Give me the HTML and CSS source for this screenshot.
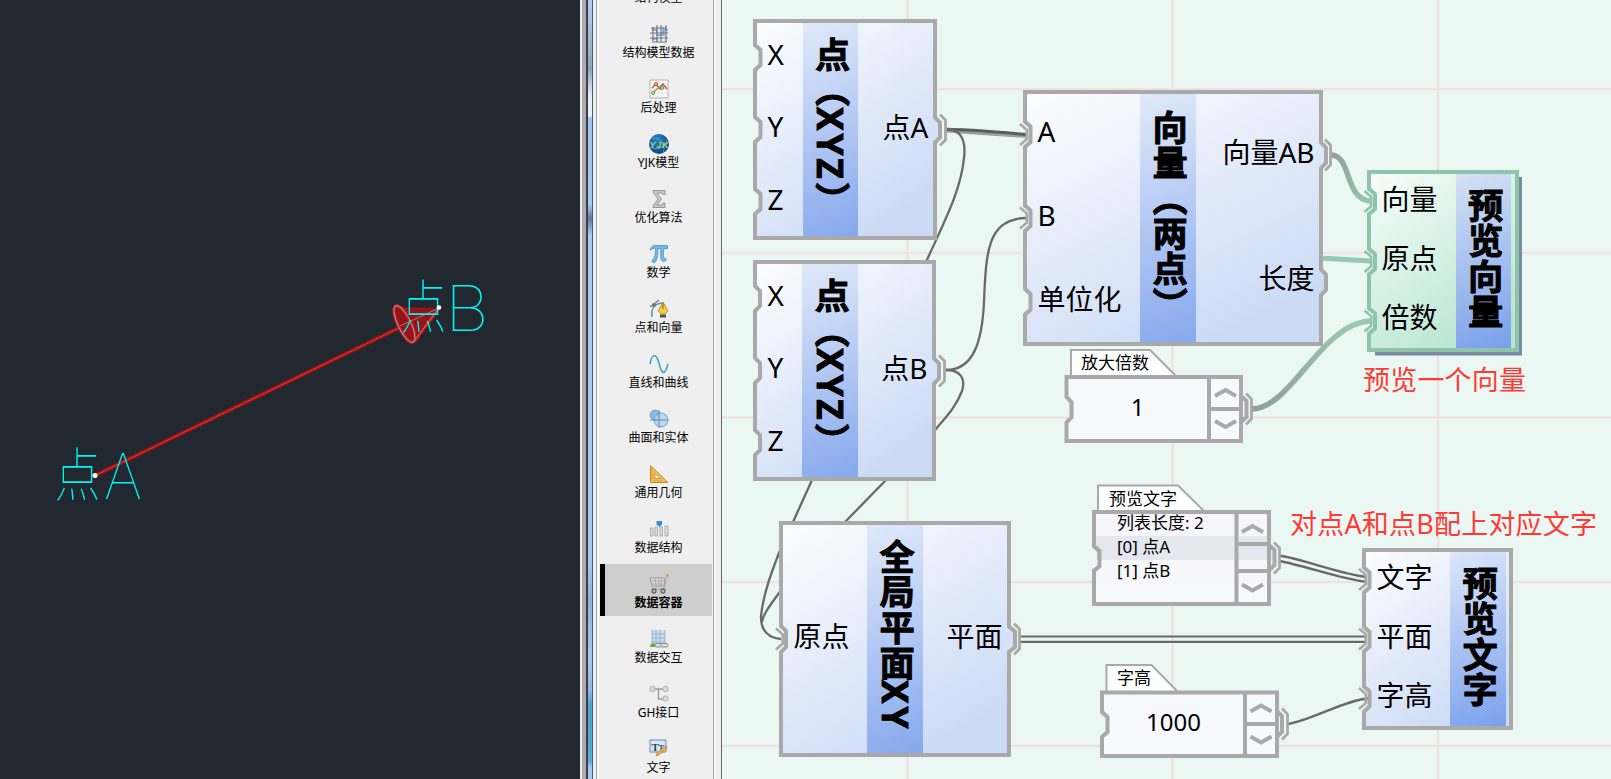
FILE: index.html
```html
<!DOCTYPE html>
<html lang="zh-CN">
<head>
<meta charset="utf-8">
<title>预览向量</title>
<link rel="stylesheet" href="styles.css">
</head>
<body>
<main class="app">
  <section class="cad">
    <svg class="cad-view" viewBox="0 0 580 779">
      <path d="M95 475.500L405 325" stroke="#a80d10" stroke-width="4"/>
      <path d="M95 475.500L405 325" stroke="#bd4a4a" stroke-width="1"/>
      <path d="M396 307L439 308L415 341C404 342 391 322 396 307Z" fill="#961318"/>
      <path d="M439 308L415 341" stroke="#d3151a" stroke-width="3"/>
      <ellipse cx="404.500" cy="324" rx="6.500" ry="20" transform="rotate(-26 404.500 324)" fill="none" stroke="#c81519" stroke-width="3.500"/>
      <ellipse cx="404.500" cy="324" rx="6.500" ry="20" transform="rotate(-26 404.500 324)" fill="none" stroke="#79b5b5" stroke-width="1"/>
      <path d="M439 308L415 340M439 308L400 326" stroke="#a77777" stroke-width="1"/>
      <g class="cad-text">
        <text class="cad-han" x="54.500" y="496" font-size="58" textLength="46" lengthAdjust="spacingAndGlyphs">点</text>
        <text class="cad-latin" x="104" y="499" font-size="63" textLength="38" lengthAdjust="spacingAndGlyphs">A</text>
        <text class="cad-han" x="400.500" y="328" font-size="58" textLength="46" lengthAdjust="spacingAndGlyphs">点</text>
        <text class="cad-latin" x="445" y="331" font-size="63" textLength="44" lengthAdjust="spacingAndGlyphs">B</text>
      </g>
      <circle cx="95" cy="475.500" r="2.500" fill="#fff"/>
      <circle cx="439" cy="307.500" r="2.300" fill="#fff"/>
    </svg>
  </section>
  <div class="splitter"><i class="s1"></i><i class="s2"></i><i class="s3"></i><i class="s4"></i><i class="s5"></i><i class="s6"></i><i class="s7"></i><i class="s8"></i></div>
  <nav class="sidebar">
    <ul class="menu">
      <li class="item"><svg class="icon" viewBox="0 0 20 20"></svg><span>结构模型</span></li>
      <li class="item"><svg class="icon" viewBox="0 0 20 20"><path d="M3 6h5v5h7V6h4M3 15h5v3M14 3v8" stroke="#6aa5d8" stroke-width="1.300" fill="none"/><path d="M2 4h16M1 9h18M1 14h18M3 18h15" stroke="#73777c" stroke-width="1.100"/><path d="M4 3v14M8 1v17M12 1v17M17 1v17" stroke="#6c7178" stroke-width="1.100"/></svg><span>结构模型数据</span></li>
      <li class="item"><svg class="icon" viewBox="0 0 20 20"><path d="M1 1h18v18H1z" fill="#f8f8f6" stroke="#b2b2b2"/><path d="M5 1v18M9 1v18M13 1v18M1 6h18M1 10h18M1 14h18" stroke="#dedede" stroke-width=".7"/><path d="M3 9l4-4 4 5 3-5 4 5" fill="none" stroke="#cf4c42" stroke-width="1.300"/><path d="M4 14l5-5 4-3 2 4" fill="none" stroke="#77a54b" stroke-width="1.300"/><circle cx="7" cy="5" r="1.400" fill="#fff" stroke="#d23"/><circle cx="4" cy="14" r="1.400" fill="#fff" stroke="#583"/><circle cx="13" cy="9" r="1.400" fill="#fff" stroke="#583"/></svg><span>后处理</span></li>
      <li class="item"><svg class="icon" viewBox="0 0 20 20"><circle cx="10" cy="10" r="10" fill="url(#globe)"/><path d="M3 5C9 1 18 10 14 19M1 13C8 17 18 13 18 5" stroke="#7fb8dd" stroke-width=".7" fill="none"/><text x="0.500" y="13.500" class="logo" textLength="19">YJK</text></svg><span>YJK模型</span></li>
      <li class="item"><svg class="icon" viewBox="0 0 20 20"><path d="M4 1.500h12v4h-2l-1-1.500H8l4.500 6L8 16h5l1-2h2v4.500H4V17l5-7-5-7z" fill="#c9c9c9" stroke="#8f8f8f" stroke-width=".9"/></svg><span>优化算法</span></li>
      <li class="item"><svg class="icon" viewBox="0 0 20 20"><path d="M1 6C2.500 2 4 1.500 7 1.500h11.500v3H15c-1 7-1 11 2 10v2c-5 3-6-2-5-12H9C9 11 8 18 5 18.500c-3 0-2-3 0-4 1-2 1.500-5 1.500-10C4 4 3 5 2 6z" fill="#75b9e8" stroke="#4c8fc2" stroke-width=".8"/></svg><span>数学</span></li>
      <li class="item"><svg class="icon" viewBox="0 0 20 20"><path d="M3 18C2 9 5 5 13 4" stroke="#4f9ac4" stroke-width="1.600" fill="none"/><path d="M1 8L10 1" stroke="#777" stroke-width="1.300"/><circle cx="5" cy="6" r="2" fill="#777"/><path d="M14 3l5 9-3 3h-4l-3-3z" fill="#f8cf42" stroke="#a87d24" stroke-width=".8"/><path d="M14 4v6" stroke="#8b641a"/><path d="M11 15.500h6v3h-6z" fill="#515151"/></svg><span>点和向量</span></li>
      <li class="item"><svg class="icon" viewBox="0 0 20 20"><path d="M1 10C3 -1 7-1 10 9C13 22 16 21 19 10" fill="none" stroke="#4296c7" stroke-width="1.500"/></svg><span>直线和曲线</span></li>
      <li class="item"><svg class="icon" viewBox="0 0 20 20"><circle cx="6" cy="6" r="5" fill="#8bbde3" stroke="#6397c0" stroke-width=".8"/><circle cx="12" cy="11" r="7" fill="#b1d1ee" fill-opacity=".8" stroke="#6b9fce"/><path d="M10 1v18M1 11h18" stroke="#63829e" stroke-width=".9"/></svg><span>曲面和实体</span></li>
      <li class="item"><svg class="icon" viewBox="0 0 20 20"><path d="M1.500 1.500L19 18.500H1.500z" fill="#f0bd55" stroke="#c58b31"/><path d="M6 9l5.500 5.500H6z" fill="#f7f3e8" stroke="#c58b31" stroke-width=".8"/><path d="M2 5h2M2 8h2M2 11h2M2 14h2M6 18v-2M9 18v-2M12 18v-2" stroke="#bd8128" stroke-width=".7"/></svg><span>通用几何</span></li>
      <li class="item"><svg class="icon" viewBox="0 0 20 20"><path d="M1.500 9h2.500v8H1.500zM6 8h2.500v9H6zM11 8h2.500v9H11zM16 7h3v10h-3z" fill="#dedede" stroke="#aaa" stroke-width=".9"/><path d="M7.500 2h5.500v3.500L10.500 8L7.500 5.500z" fill="#3b8dc9"/></svg><span>数据结构</span></li>
      <li class="item active"><svg class="icon" viewBox="0 0 20 20"><path d="M1 4h15l-1 8H3z" fill="#ddd" stroke="#999"/><path d="M18 2l-3 13H3M3 7h12M3 10h11M6 4l1 8M10 4v8M13 4l-1 8" fill="none" stroke="#a2a2a2" stroke-width=".8"/><circle cx="18.500" cy="1.500" r="1.400" fill="#f0932c"/><circle cx="5" cy="17" r="2" fill="#bbb" stroke="#666" stroke-width="1.300"/><circle cx="14" cy="17" r="2" fill="#bbb" stroke="#666" stroke-width="1.300"/></svg><span>数据容器</span></li>
      <li class="item"><svg class="icon" viewBox="0 0 20 20"><path d="M3 1h13v15H3z" fill="#c9dcf0"/><path d="M3 5h13M3 9h13M3 13h13M7 1v15M11 1v15M3 1v15M16 1v15" stroke="#91a9c4" stroke-width=".8"/><path d="M1 18c0-5 6-5 6 0z" fill="#7aa737"/><rect x="6" y="14.500" width="7" height="3.500" rx="1.700" fill="#ddd" stroke="#888"/><rect x="12" y="14.500" width="7" height="3.500" rx="1.700" fill="#ddd" stroke="#888"/></svg><span>数据交互</span></li>
      <li class="item"><svg class="icon" viewBox="0 0 20 20"><path d="M5 5h11M9.500 5v10h7" fill="none" stroke="#999" stroke-width="1.300"/><g fill="#ddd" stroke="#a8a8a8" stroke-width=".9"><circle cx="3.500" cy="5" r="2.700"/><circle cx="16.500" cy="5" r="2.700"/><circle cx="16.500" cy="14.500" r="2.700"/></g></svg><span>GH接口</span></li>
      <li class="item"><svg class="icon" viewBox="0 0 20 20"><path d="M1 1h16v12H1z" fill="#d8e8f6" stroke="#668db0"/><text x="2.500" y="11.500" class="tt">T</text><text x="9.500" y="11.500" class="tt small">T</text><path d="M7 17l1-3 8-7 2 2-8 7z" fill="#f2ad42" stroke="#af6d21" stroke-width=".6"/><path d="M16 7l1-1 2 2-1 1z" fill="#c79ac9"/></svg><span>文字</span></li>
    </ul>
  </nav>
  <div class="gutter"><i class="g1"></i><i class="g2"></i><i class="g3"></i></div>
  <section class="canvas">
    <svg class="wires" viewBox="722 0 889 779">
      <defs>
        <radialGradient id="globe" cx=".4" cy=".3" r=".8"><stop offset="0" stop-color="#2586bd"/><stop offset="1" stop-color="#083a85"/></radialGradient>
        <linearGradient id="body" x1="0" y1="0" x2=".6" y2="1"><stop offset="0" stop-color="#fdfdff"/><stop offset="1" stop-color="#ccdbf5"/></linearGradient>
        <linearGradient id="mint" x1="0" y1="0" x2=".6" y2="1"><stop offset="0" stop-color="#f8fdfb"/><stop offset="1" stop-color="#b9e6d1"/></linearGradient>
        <linearGradient id="w1" gradientUnits="userSpaceOnUse" x1="1332" y1="0" x2="1365" y2="0"><stop offset="0" stop-color="#939d99"/><stop offset="1" stop-color="#93c5af"/></linearGradient>
        <linearGradient id="w2" gradientUnits="userSpaceOnUse" x1="1252" y1="0" x2="1350" y2="0"><stop offset="0" stop-color="#919b97"/><stop offset="1" stop-color="#99c8b4"/></linearGradient>
        <path id="plug-out" d="M0 -15.500l5.500 5.500V10l-5.500 5.500" fill="none" stroke-width="2.800"/>
        <path id="plug-in" d="M-5 -10.500L1.700 -4.700V4.700L-5 10.500" fill="none" stroke-width="2.600"/>
        <path id="up" d="M-10.500 4L0 -2L10.500 4" fill="none" stroke="#a9a9a9" stroke-width="4"/>
        <path id="down" d="M-10.500 -4L0 2L10.500 -4" fill="none" stroke="#a9a9a9" stroke-width="4"/>
      </defs>
      <path d="M907.500 0V779M1172.500 0V779M1438 0V779M722 89H1611M722 253H1611M722 417.500H1611M722 582H1611M722 746H1611" stroke="#f0e2e2" stroke-width="2.500"/>
      <g fill="none" stroke="#696969" stroke-width="2.300">
        <path d="M946 130L1026 135.500" stroke="#94a49d" stroke-width="5"/>
        <path d="M946 129.500C970 129.500 1000 132 1026 134.500" stroke="#595d5b" stroke-width="2.800"/>
        <path d="M946 129C962 129 966 142 964 158C961 190 945 220 926 262L812 480L793 522L779 553C767 583 762 603 761 617C761 632 770 638 781 639"/>
        <path d="M946 370C960 370 966 378 962 391C956 407 945 418 936 429L886 480L845 522C810 558 790 578 779 593C768 608 763 615 762 622"/>
        <path d="M946 370C972 370 982 345 984 302C986 250 988 219 1026 218"/>
        <path d="M1331 155C1352 155 1344 200 1371 201" stroke="url(#w1)" stroke-width="5.500"/>
        <path d="M1320 258L1371 261" stroke="#98c8b4" stroke-width="5"/>
        <path d="M1252 409C1291 409 1322 322 1371 321" stroke="url(#w2)" stroke-width="5.500"/>
        <path d="M1279 555.500C1303 559 1340 574 1367 577M1279 561C1303 565 1340 579 1367 582"/>
        <path d="M1020 636.500H1367M1020 641.800H1367" stroke-width="2.200"/>
        <path d="M1288 724C1312 720 1345 700 1368 698.500"/>
      </g>
    </svg>

    <article class="node point-a">
      <svg class="frame" viewBox="755 21 180 217"><path d="M755 21H935V117.500L940 122.500V137.500L935 142.500V238H755V214L760.500 209V194L755 189V142L760.500 137V122L755 117V70L760.500 65V50L755 45Z"/><use href="#plug-out" x="940" y="130"/></svg>
      <div class="ports"><span>X</span><span>Y</span><span>Z</span></div>
      <h2 class="title">点（<span class="latin">XYZ</span>）</h2>
      <div class="ports out"><span>点A</span></div>
    </article>

    <article class="node point-b">
      <svg class="frame" viewBox="755 262 179 217"><path d="M755 262H934V358.500L939 363.500V378.500L934 383.500V479H755V455L760 450V435L755 430V383L760 378V363L755 358V311L760 306V291L755 286Z"/><use href="#plug-out" x="939" y="371"/></svg>
      <div class="ports"><span>X</span><span>Y</span><span>Z</span></div>
      <h2 class="title">点（<span class="latin">XYZ</span>）</h2>
      <div class="ports out"><span>点B</span></div>
    </article>

    <article class="node plane">
      <svg class="frame" viewBox="781 523 228 232"><path d="M781 523H1009V626.500L1015 631.500V647L1009 652V755H781V652L786 647V631L781 626Z"/><use href="#plug-out" x="1014" y="639"/><use href="#plug-in" x="781" y="639"/></svg>
      <div class="ports"><span>原点</span></div>
      <h2 class="title">全局平面<span class="latin">XY</span></h2>
      <div class="ports out"><span>平面</span></div>
    </article>

    <article class="node vector">
      <svg class="frame" viewBox="1025 92 296 252"><path d="M1025 92H1321V142.500L1326 147.500V163L1321 168V269.500L1326 274.500V290L1321 295V344H1025V314.500L1030.500 309.500V294L1025 289V231L1030.500 226V210.500L1025 205.500V147L1030.500 142V126.500L1025 121.500Z"/><use href="#plug-out" x="1325" y="155"/><use href="#plug-in" x="1025" y="134.500"/><use href="#plug-in" x="1025" y="218"/></svg>
      <div class="ports"><span>A</span><span>B</span><span>单位化</span></div>
      <h2 class="title">向量（两点）</h2>
      <div class="ports out"><span>向量AB</span><span>长度</span></div>
    </article>

    <article class="node preview-vector">
      <svg class="frame mint" viewBox="1369 172 148 178"><path class="drop" d="M1375 177H1522V355.500H1375Z"/><path d="M1369 172H1517V350H1369V333.500L1375 328.500V313.500L1369 308.500V274L1375 269V254L1369 249V214L1375 209V194L1369 189Z"/><use href="#plug-in" x="1369.500" y="201.500"/><use href="#plug-in" x="1369.500" y="261.500"/><use href="#plug-in" x="1369.500" y="321"/></svg>
      <div class="ports"><span>向量</span><span>原点</span><span>倍数</span></div>
      <h2 class="title">预览向量</h2>
    </article>

    <article class="node preview-text">
      <svg class="frame" viewBox="1364 550 147 178"><path d="M1364 550H1511V728H1364V711.500L1369.500 706.500V691.500L1364 686.500V651.500L1369.500 646.500V632L1364 627V592.500L1369.500 587.500V572.500L1364 567.500Z"/><use href="#plug-in" x="1364" y="579.500"/><use href="#plug-in" x="1364" y="639"/><use href="#plug-in" x="1364" y="698.500"/></svg>
      <div class="ports"><span>文字</span><span>平面</span><span>字高</span></div>
      <h2 class="title">预览文字</h2>
    </article>

    <article class="widget scale">
      <svg class="frame plain" viewBox="1066 349 175 92"><path class="tab" d="M1071 377V350H1150L1176 376"/><path d="M1241 396L1246.500 401V417L1241 422"/><path d="M1066.500 377H1241V441H1066.500V422.500L1071.500 417.500V402L1066.500 397ZM1209 377V441M1209 409H1241"/><use href="#up" x="1225.500" y="392"/><use href="#down" x="1225.500" y="425"/><use href="#plug-out" x="1246" y="409"/></svg>
      <header class="tab-label">放大倍数</header>
      <div class="value">1</div>
    </article>

    <article class="widget panel">
      <svg class="frame plain" viewBox="1094 485 175 119"><path class="tab" d="M1098 512V485.500H1178L1204 511"/><path d="M1094 512H1269V604H1094V571L1099.500 566V551L1094 546Z"/><path d="M1096 514H1267V536H1096Z" fill="#f5f5fb" stroke="none"/><path d="M1096 560H1267V584H1096Z" fill="#f7f6fb" stroke="none"/><path d="M1096 536H1267L1273 548V560H1101V551L1096 545Z" fill="#e4e7ee" stroke="none"/><path d="M1094 512H1269V604H1094V571L1099.500 566V551L1094 546ZM1236.500 512V604M1236.500 544H1268L1274.500 550V565L1268 571H1236.500" fill="none"/><use href="#up" x="1252.500" y="528"/><use href="#down" x="1252.500" y="588.500"/><use href="#plug-out" x="1274" y="558"/></svg>
      <header class="tab-label">预览文字</header>
      <ul class="rows"><li>列表长度: 2</li><li>[0] 点A</li><li>[1] 点B</li></ul>
    </article>

    <article class="widget height">
      <svg class="frame plain" viewBox="1102 664 175 92"><path class="tab" d="M1106.500 692V665H1151.500L1177 691"/><path d="M1277 711L1282 716V732L1277 737"/><path d="M1102 692.500H1277V756H1102V737L1107.500 732V717L1102 712ZM1245 692.500V756M1245 724H1277"/><use href="#up" x="1261" y="707.500"/><use href="#down" x="1261" y="740.500"/><use href="#plug-out" x="1282" y="724"/></svg>
      <header class="tab-label">字高</header>
      <div class="value">1000</div>
    </article>

    <p class="note note-vector">预览一个向量</p>
    <p class="note note-text">对点A和点B配上对应文字</p>
  </section>
</main>
</body>
</html>
```

FILE: styles.css
```css
* { box-sizing: border-box; }
body {
  margin: 0;
  overflow: hidden;
  font-family: "Noto Sans", "Noto Sans CJK SC", sans-serif;
  color: #000;
}
ul { list-style: none; margin: 0; padding: 0; }
h2, p { margin: 0; }

.app {
  display: flex;
  position: relative;
  width: 1611px;
  height: 779px;
  overflow: hidden;
}

.cad { width: 580px; background: #22282f; }
.cad-view { display: block; width: 580px; height: 779px; }
.cad-text { fill: #00f4f4; }
.cad-han { font-family: "Noto Sans CJK SC", sans-serif; font-weight: 100; }
.cad-latin { font-family: Inter, sans-serif; font-weight: 100; }

.splitter { display: flex; width: 19px; background: #efefef; }
.s1 { width: 2px; background: #f1eeea; }
.s2 { width: 4px; background: #aeaab3; }
.s3 { width: 2px; background: #3b3f45; }
.s4 {
  width: 4px;
  background: linear-gradient(#b4cfee 0, #8fa5bd 70px, #e4edf7 95px, #e9f1fa 116px, #9dc4ef 118px, #a5c8ef 205px, #627a96 218px, #a9cbf0 235px, #a9c7ed 560px, #8eb1dc 600px, #a9c7ed 660px, #8fb8e0 690px, #4fa3d0 705px, #55abd4 760px, #a9c7ed 768px);
}
.s5 { width: 1px; background: #46566b; }
.s6 { width: 3px; background: #f3f3f3; }
.s7 { width: 1px; background: #a0a0a0; }
.s8 { width: 2px; background: #fafafa; }

.sidebar { width: 114px; overflow: hidden; background: #efefef; }
.menu {
  display: flex;
  flex-direction: column;
  gap: 3px;
  margin: -41px 1px 0;
}
.item {
  display: flex;
  flex: none;
  flex-direction: column;
  align-items: center;
  width: 112px;
  height: 52px;
  padding: 10px 0 0 5px;
  font-size: 12px;
  line-height: 17px;
  white-space: nowrap;
}
.item.active {
  padding-left: 0;
  border-left: 5px solid #000;
  background: #cecece;
  font-weight: 700;
}
.icon { display: block; flex: none; width: 20px; height: 20px; }
.logo { fill: #a4dc69; font: italic 700 9px "Liberation Sans", sans-serif; }
.tt { fill: #294864; font: 700 11px "Liberation Serif", serif; }
.tt.small { font-size: 8px; }

.gutter { display: flex; width: 9px; background: #efefef; }
.g1 { width: 1px; background: #a0a0a0; }
.g2 { width: 7px; background: linear-gradient(90deg, #fff 0 1px, #efefef 1px); }
.g3 { width: 1px; background: #6b6b6b; }

.canvas { flex: 1; background: #eaf7f3; }
.wires { display: block; width: 889px; height: 779px; }

.node {
  display: grid;
  position: absolute;
  font-size: 28px;
  line-height: 40px;
  white-space: nowrap;
}
.frame {
  position: absolute;
  inset: 0;
  width: 100%;
  height: 100%;
  overflow: visible;
  fill: url(#body);
  stroke: #a9a9a9;
  stroke-width: 4px;
}
.frame.mint { fill: url(#mint); stroke: #8fc4ac; }
.frame.plain { fill: #f8f9ff; }
.drop { fill: #7b8b9f; stroke: none; }
.tab { fill: #fff; stroke-width: 2px; }

.ports {
  display: grid;
  position: relative;
  grid-auto-rows: 1fr;
  align-items: center;
  margin: -3px 0 3px;
  padding-left: 12.5px;
}
.out { justify-items: end; padding: 0 6.5px 0 0; }
.title {
  display: flex;
  position: relative;
  align-items: center;
  justify-content: center;
  margin: 2px 0;
  padding: 0 0 5px 1px;
  background: linear-gradient(160deg, #e0e9f9, #86a8ed);
  font-size: 35.3px;
  font-weight: 700;
  line-height: 49px;
  writing-mode: vertical-rl;
  -webkit-text-stroke: .9px #000;
}
.latin { letter-spacing: 2.8px; }

.point-a { left: 755px; top: 21px; width: 180px; height: 217px; grid-template-columns: 47.5px 55.5px 77px; }
.point-b { left: 755px; top: 262px; width: 179px; height: 217px; grid-template-columns: 47px 55.5px 76.5px; }
.plane { left: 781px; top: 523px; width: 228px; height: 232px; grid-template-columns: 86px 55.5px 86.5px; }
.vector { left: 1025px; top: 92px; width: 296px; height: 252px; grid-template-columns: 115px 55.5px 125.5px; }
.preview-vector { left: 1369px; top: 172px; width: 148px; height: 178px; grid-template-columns: 86.5px 55.5px; }
.preview-text { left: 1364px; top: 550px; width: 147px; height: 178px; grid-template-columns: 86px 55.5px; }
.plane .title { padding-bottom: 8px; }
.preview-vector .title { background: linear-gradient(160deg, #d4e2f3, #7aa0ea); }
.preview-text .title { background: linear-gradient(160deg, #dce6fa, #7ba1ec); }

.widget {
  display: flex;
  flex-direction: column;
  position: absolute;
  width: 175px;
  font-size: 17px;
}
.scale { left: 1066px; top: 349px; height: 92px; }
.panel { left: 1094px; top: 485px; height: 119px; }
.height { left: 1102px; top: 664px; height: 92px; }
.tab-label { position: relative; height: 28px; padding-left: 15px; line-height: 27px; }
.value {
  position: relative;
  flex: 1;
  width: 143px;
  font-size: 24px;
  line-height: 60px;
  text-align: center;
}
.rows { position: relative; margin-top: -2px; padding-left: 23px; line-height: 24px; }

.note {
  position: absolute;
  color: #ff3a35;
  font-size: 27px;
  line-height: 40px;
  white-space: nowrap;
  letter-spacing: .2px;
}
.note-vector { left: 1363px; top: 360px; }
.note-text { left: 1290px; top: 504px; }
```
